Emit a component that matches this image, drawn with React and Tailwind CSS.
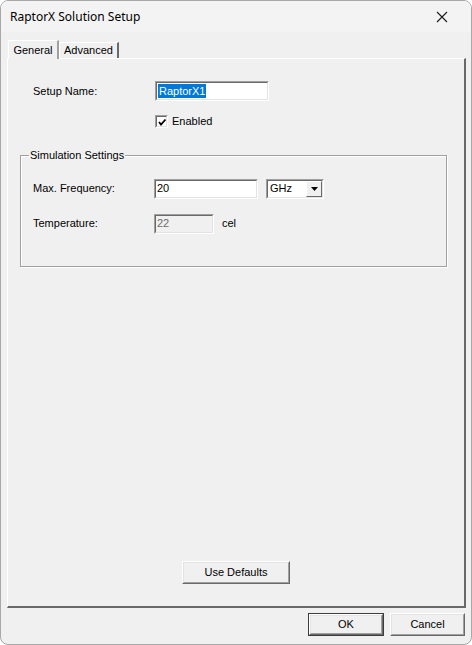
import React from 'react';

const Sunken = ({ className = '', children }) => (
  <div
    className={`border border-t-[#a0a0a0] border-l-[#a0a0a0] border-b-white border-r-white ${className}`}
  >
    <div className="h-full w-full border border-t-[#696969] border-l-[#696969] border-b-[#e3e3e3] border-r-[#e3e3e3]">
      {children}
    </div>
  </div>
);

const Button = ({ children, className = '', isDefault = false }) => (
  <div className={`${isDefault ? 'border border-[#3c3c3c]' : ''} ${className}`}>
    <div className="h-full border border-t-white border-l-white border-b-[#696969] border-r-[#696969]">
      <div className="h-full flex items-center justify-center border border-t-[#e3e3e3] border-l-[#e3e3e3] border-b-[#a0a0a0] border-r-[#a0a0a0] bg-[#f0f0f0] text-[11px] text-black">
        {children}
      </div>
    </div>
  </div>
);

const App = () => {
  return (
    <div
      className="w-[472px] h-[645px] bg-[#f0f0f0] rounded-[8px] border border-[#a8a8a8] overflow-hidden flex flex-col"
      style={{ fontFamily: '"Liberation Sans", Arial, sans-serif' }}
    >
      {/* title bar */}
      <div className="h-[31px] flex items-center justify-between pl-[9px] pr-[23px] bg-[#f3f3f3] shrink-0">
        <span className="text-[12px] text-black" style={{ fontFamily: '"Noto Sans", sans-serif' }}>
          RaptorX Solution Setup
        </span>
        <svg width="12" height="12" viewBox="0 0 12 12">
          <path d="M1 1 L11 11 M11 1 L1 11" stroke="#1a1a1a" strokeWidth="1.1" />
        </svg>
      </div>

      <div className="flex-1 flex flex-col pl-[6px] pr-[5px] pt-[8px]">
        {/* tabs */}
        <div className="flex items-end h-[18px] pl-[1px] relative z-10">
          <div className="h-[19px] w-[51px] -mb-[1px] bg-[#f0f0f0] border-l border-t border-white border-r-2 border-r-[#a0a0a0] flex items-start justify-center pt-[1px] text-[11px] text-black">
            General
          </div>
          <div className="h-[16px] w-[60px] border-l border-t border-white border-r-2 border-r-[#696969] flex items-center justify-center text-[11px] text-black">
            Advanced
          </div>
        </div>

        {/* panel */}
        <div className="h-[550px] border-l border-t border-white border-r-2 border-b-2 border-r-[#696969] border-b-[#696969] flex flex-col">
          <div className="pt-[22px] pl-[25px] flex items-center">
            <span className="w-[122px] text-[11px]">Setup Name:</span>
            <Sunken className="w-[114px] h-[20px] bg-white">
              <div className="h-full flex items-center pl-[1px]">
                <span className="bg-[#0078d7] text-white text-[11px] px-[1px] leading-[14px]">RaptorX1</span>
              </div>
            </Sunken>
          </div>

          <div className="mt-[12px] pl-[147px] flex items-center">
            <Sunken className="w-[13px] h-[13px] bg-white">
              <svg width="11" height="11" viewBox="0 0 11 11">
                <path d="M2 5 L4 7.5 L8.5 2.5" stroke="black" strokeWidth="1.8" fill="none" />
              </svg>
            </Sunken>
            <span className="ml-[4px] text-[11px]">Enabled</span>
          </div>

          <fieldset className="mt-[19px] ml-[12px] w-[427px] h-[118px] border border-[#a0a0a0] shadow-[inset_1px_1px_0_#fff,1px_1px_0_#fff]">
            <legend className="ml-[8px] px-[1px] text-[11px] leading-[13px]">Simulation Settings</legend>
            <div className="px-[12px]">
              <div className="mt-[17px] flex items-center">
                <span className="w-[121px] text-[11px]">Max. Frequency:</span>
                <Sunken className="w-[104px] h-[20px] bg-white">
                  <div className="h-full flex items-center pl-[1px] text-[11px]">20</div>
                </Sunken>
                <Sunken className="ml-[8px] w-[58px] h-[20px] bg-white">
                  <div className="h-full flex items-center justify-between text-[11px]">
                    <span className="pl-[2px]">GHz</span>
                    <div className="w-[16px] h-full border border-t-white border-l-white border-b-[#696969] border-r-[#696969] bg-[#f0f0f0] flex items-center justify-center">
                      <svg width="7" height="4" viewBox="0 0 7 4">
                        <path d="M0 0 H7 L3.5 4 Z" fill="black" />
                      </svg>
                    </div>
                  </div>
                </Sunken>
              </div>
              <div className="mt-[15px] flex items-center">
                <span className="w-[121px] text-[11px]">Temperature:</span>
                <Sunken className="w-[60px] h-[20px] bg-[#f0f0f0]">
                  <div className="h-full flex items-center pl-[1px] text-[11px] text-[#6d6d6d]">22</div>
                </Sunken>
                <span className="ml-[8px] text-[11px]">cel</span>
              </div>
            </div>
          </fieldset>

          <div className="mt-auto mb-[22px] pl-[174px]">
            <Button className="w-[108px] h-[23px]">Use Defaults</Button>
          </div>
        </div>

        {/* footer */}
        <div className="flex justify-end gap-[6px] mt-[5px] pr-[1px]">
          <Button isDefault className="w-[76px] h-[23px]">OK</Button>
          <Button className="w-[75px] h-[23px]">Cancel</Button>
        </div>
      </div>
    </div>
  );
};

export default App;
